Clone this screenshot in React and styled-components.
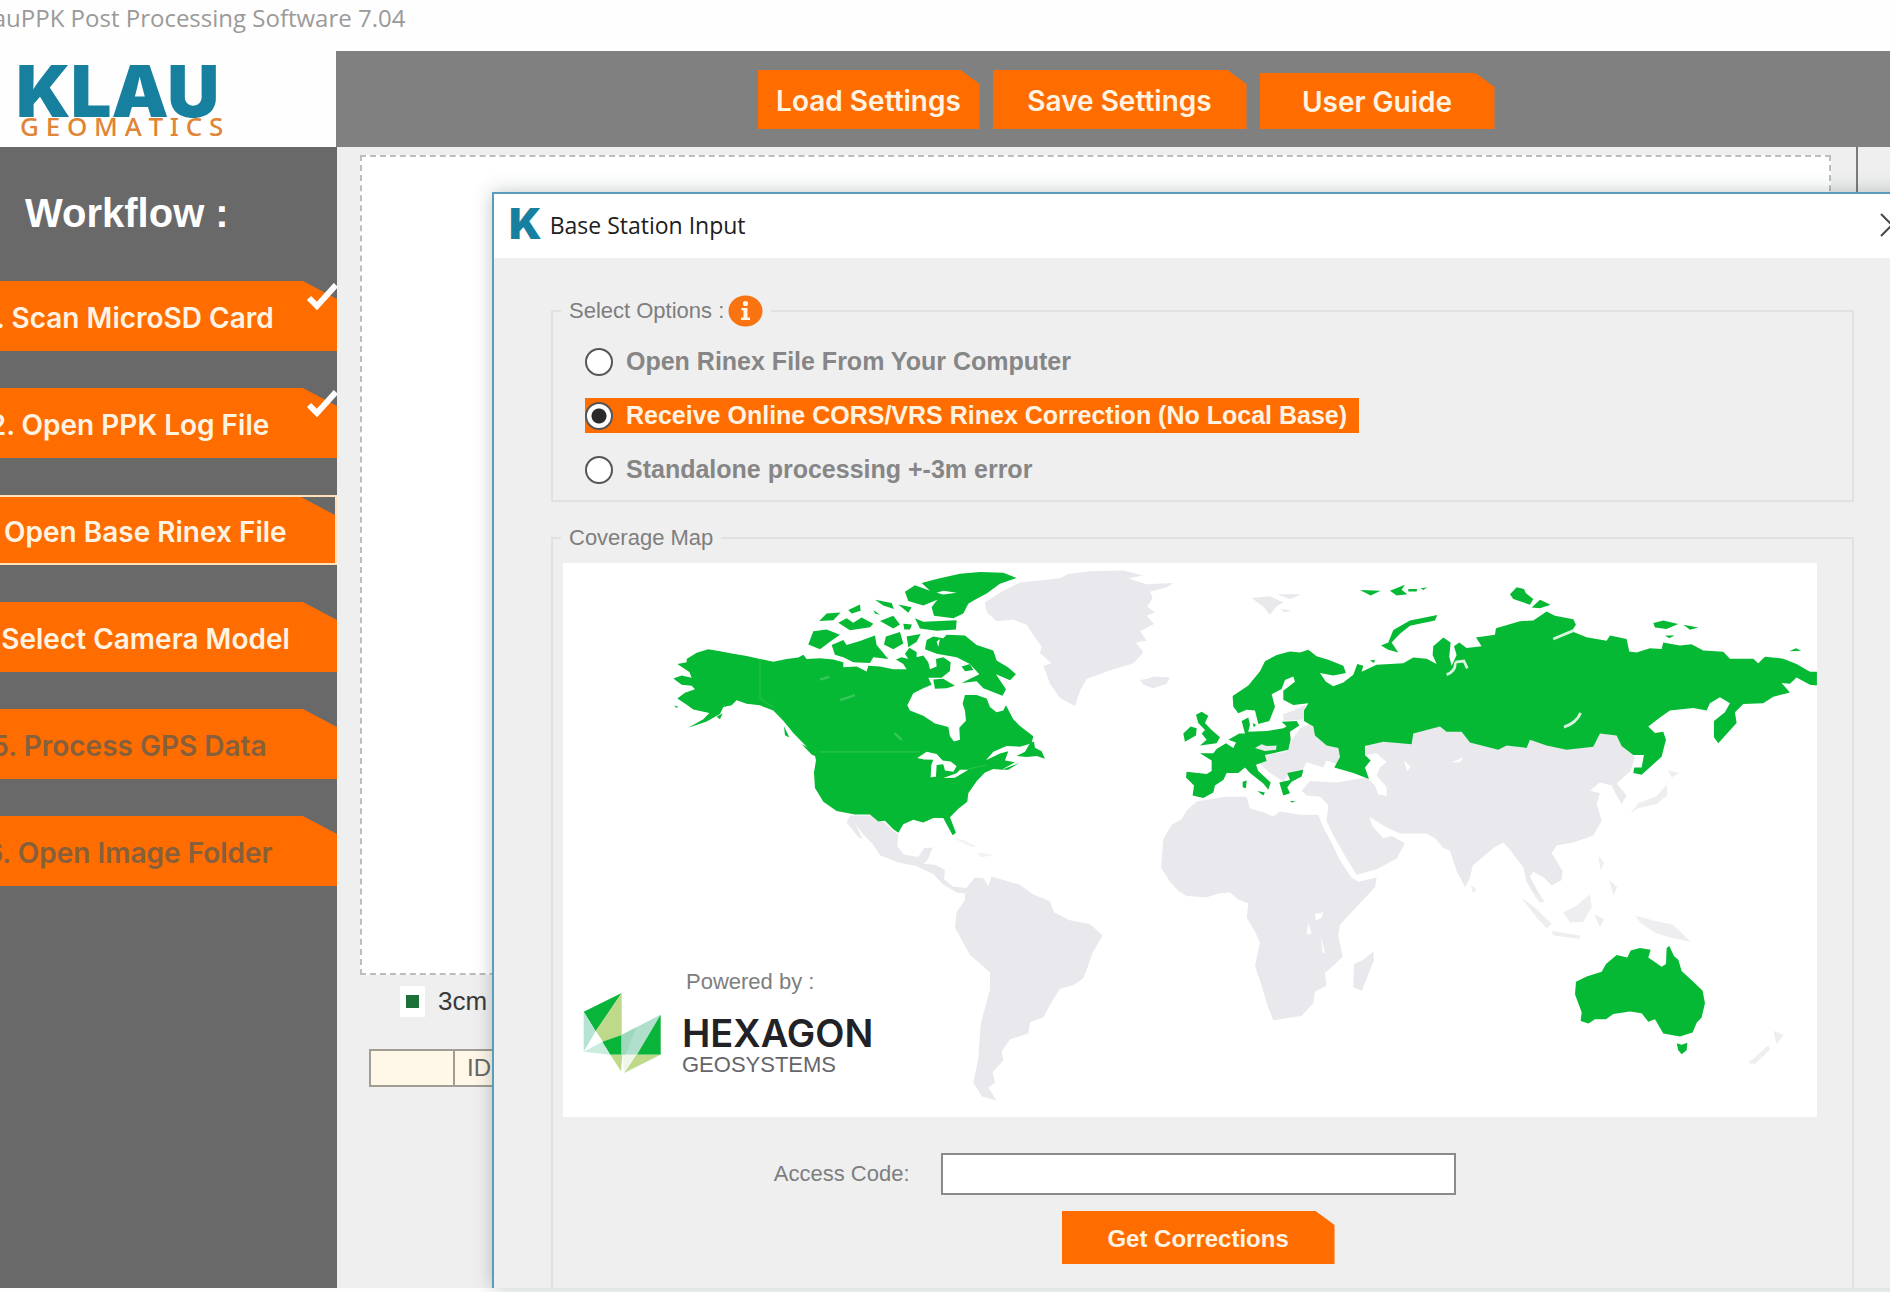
import React, { useState } from 'react';
import styled, { createGlobalStyle } from 'styled-components';

const GlobalStyle = createGlobalStyle`
  * {
    box-sizing: border-box;
  }

  body {
    margin: 0;
    background: #fefefe;
    font-family: 'Liberation Sans', Arial, sans-serif;
    overflow: hidden;
  }
`;

const Shell = styled.div`
  position: relative;
  display: flex;
  flex-direction: column;
  height: 100vh;
  padding-bottom: 4px;
  overflow: hidden;
`;

const TitleBar = styled.header`
  height: 51px;
  padding-top: 2px;
  margin-left: -28px;
  color: #9a9a9a;
  font-family: 'Open Sans', 'Noto Sans', sans-serif;
  font-size: 24px;
  line-height: 32px;
  white-space: nowrap;
`;

const TopBar = styled.div`
  display: flex;
  height: 96px;
`;

const Brand = styled.div`
  width: 336px;
  padding: 8px 0 0 16px;
  background: #fefefe;
`;

const BrandName = styled.div`
  color: #17809f;
  font-family: Inter, sans-serif;
  font-weight: 900;
  font-size: 72px;
  line-height: 64px;
  height: 54px;
`;

const BrandSub = styled.div`
  padding-left: 4px;
  color: #e08535;
  font-family: 'Noto Sans', sans-serif;
  font-size: 26px;
  font-weight: 500;
  line-height: 26px;
  white-space: nowrap;
`;

const Toolbar = styled.nav`
  flex: 1;
  display: flex;
  justify-content: center;
  align-items: flex-end;
  gap: 13px;
  padding: 0 0 18px 26px;
  background: #808080;
`;

const OrangeButton = styled.button`
  width: ${(props) => props.$width}px;
  height: ${(props) => props.$height}px;
  padding: 2px 0 0;
  border: none;
  background: #ff6d00;
  color: #fff3e4;
  font-family: ${(props) => (props.$plain ? "'Liberation Sans', Arial" : 'Inter')}, sans-serif;
  font-size: ${(props) => (props.$plain ? 24 : 28)}px;
  font-weight: ${(props) => (props.$plain ? 700 : 600)};
  white-space: nowrap;
  cursor: pointer;
  clip-path: polygon(0 0, calc(100% - 19px) 0, 100% 14px, 100% 100%, 0 100%);
`;

const Body = styled.div`
  flex: 1;
  display: flex;
  min-height: 0;
`;

const Sidebar = styled.aside`
  width: 337px;
  background: #696969;
  overflow: hidden;
`;

const SidebarTitle = styled.h1`
  margin: 0;
  padding: 44px 0 46px 25px;
  color: #ffffff;
  font-size: 40px;
  line-height: 44px;
`;

const StepList = styled.ol`
  display: flex;
  flex-direction: column;
  gap: 37px;
  margin: 0 0 0 -79px;
  padding: 0;
  list-style: none;
`;

const Step = styled.li`
  position: relative;
  display: flex;
  height: 70px;
  border: ${(props) => (props.$current ? '2px solid #ffe3b8' : 'none')};
`;

const StepButton = styled.button`
  flex: 1;
  padding: 4px 0 0;
  border: none;
  background: #ff6d00;
  color: #fff3e4;
  font-family: Inter, sans-serif;
  font-size: 28px;
  font-weight: 600;
  white-space: nowrap;
  cursor: pointer;
  clip-path: polygon(0 0, calc(100% - 34px) 0, 100% 18px, 100% 100%, 0 100%);

  &:disabled {
    color: #86603c;
    cursor: default;
  }
`;

const StepCheck = styled.svg`
  position: absolute;
  top: 0;
  right: 0;
  width: 31px;
  height: 30px;
`;

const Main = styled.main`
  flex: 1;
  display: flex;
  background: #efefef;
`;

const PlotColumn = styled.section`
  flex: 1;
  display: flex;
  flex-direction: column;
  padding: 8px 25px 201px 23px;
  border-right: 2px solid #7b7b7b;
`;

const SideGutter = styled.div`
  width: 32px;
`;

const PlotArea = styled.div`
  flex: 1;
  background: #ffffff;
  border: 2px dashed #bdbdbd;
`;

const Legend = styled.div`
  display: flex;
  align-items: center;
  gap: 13px;
  margin: 11px 0 32px 40px;
  color: #3a3a3a;
  font-size: 26px;
  line-height: 31px;
`;

const Swatch = styled.span`
  width: 25px;
  height: 31px;
  background: #1c7038;
  border: solid #ffffff;
  border-width: 9px 6px;
`;

const PointTable = styled.table`
  margin-left: 9px;
  border-collapse: collapse;
  background: #fff7e8;

  th {
    height: 36px;
    padding: 0 12px;
    border: 2px solid #a19c94;
    color: #666;
    font-size: 24px;
    font-weight: 400;
    line-height: 28px;
    text-align: left;
  }

  th:first-child {
    width: 84px;
  }
`;

const Dialog = styled.div`
  position: absolute;
  top: 192px;
  right: -24px;
  bottom: 4px;
  left: 492px;
  display: flex;
  flex-direction: column;
  background: #efefef;
  border: 2px solid #5b9cbd;
  border-bottom: none;
  box-shadow: 0 0 18px rgba(40, 60, 60, 0.28);
  overflow: hidden;
`;

const DialogBar = styled.div`
  flex: none;
  display: flex;
  align-items: center;
  gap: 8px;
  height: 64px;
  padding: 0 8px 2px 15px;
  background: #ffffff;
`;

const DialogMark = styled.span`
  padding-bottom: 4px;
  color: #17809f;
  font-family: Inter, sans-serif;
  font-size: 43px;
  font-weight: 900;
  line-height: 44px;
`;

const DialogTitle = styled.h2`
  flex: 1;
  margin: 0;
  color: #202020;
  font-family: 'Open Sans', 'Noto Sans', sans-serif;
  font-size: 23px;
  font-weight: 400;
  line-height: 32px;
`;

const CloseButton = styled.button`
  padding: 0;
  border: none;
  background: none;
  line-height: 0;
  cursor: pointer;
`;

const DialogBody = styled.form`
  display: flex;
  flex-direction: column;
  gap: 20px;
  padding: 37px 58px 0 57px;
`;

const Group = styled.fieldset`
  min-width: 0;
  margin: 0;
  padding: 0;
  border: 2px solid #e1e1e1;
`;

const GroupTitle = styled.legend`
  display: flex;
  align-items: center;
  gap: 4px;
  height: 32px;
  margin-left: 8px;
  padding: 0 8px;
  color: #7e7e7e;
  font-size: 22px;
  line-height: 32px;
`;

const OptionList = styled.div`
  display: flex;
  flex-direction: column;
  align-items: flex-start;
  gap: 19px;
  padding: 17px 32px 13px;
`;

const Option = styled.label`
  display: flex;
  align-items: center;
  gap: 13px;
  height: 35px;
  padding-right: 12px;
  background: ${(props) => (props.$selected ? '#ff6d00' : 'transparent')};
  color: ${(props) => (props.$selected ? '#fff3e4' : '#868686')};
  font-size: 25px;
  font-weight: 700;
  white-space: nowrap;
  cursor: pointer;
`;

const Radio = styled.input`
  appearance: none;
  width: 28px;
  height: 28px;
  margin: 0;
  border: 2px solid #555555;
  border-radius: 50%;
  background: #ffffff;

  &:checked {
    background: radial-gradient(circle, #2a2a2a 7px, #ffffff 8px);
  }
`;

const MapFrame = styled.div`
  position: relative;
  margin: 9px 35px 36px 10px;
  background: #ffffff;

  > svg {
    display: block;
    width: 100%;
  }
`;

const PoweredBy = styled.div`
  position: absolute;
  left: 20px;
  bottom: 44px;
  display: grid;
  grid-template-columns: 78px auto;
  column-gap: 21px;
  align-items: center;
`;

const PoweredLabel = styled.span`
  grid-column: 2;
  padding-left: 4px;
  color: #7e7e7e;
  font-size: 22px;
  line-height: 22px;
`;

const Partner = styled.div`
  padding-top: 20px;
  height: 80px;
`;

const PartnerName = styled.div`
  color: #222226;
  font-family: Inter, sans-serif;
  font-size: 38px;
  font-weight: 600;
  line-height: 40px;
`;

const PartnerSub = styled.div`
  color: #66666a;
  font-size: 22px;
  line-height: 24px;
`;

const AccessForm = styled.div`
  display: grid;
  grid-template-columns: max-content 515px;
  gap: 16px 31px;
  align-items: center;
  padding: 0 0 60px 17%;
`;

const AccessLabel = styled.label`
  color: #7e7e7e;
  font-size: 22px;
`;

const AccessInput = styled.input`
  width: 100%;
  height: 42px;
  padding: 0 8px;
  border: 2px solid #8b8b8b;
  background: #ffffff;
  font-size: 22px;
`;

const SubmitCell = styled.div`
  grid-column: 2;
  display: flex;
  justify-content: center;
`;

const steps = [
  { label: '1. Scan MicroSD Card', done: true },
  { label: '2. Open PPK Log File', done: true },
  { label: '3. Open Base Rinex File', current: true },
  { label: '4. Select Camera Model' },
  { label: '5. Process GPS Data', disabled: true },
  { label: '6. Open Image Folder', disabled: true },
];

const options = [
  { id: 'file', label: 'Open Rinex File From Your Computer' },
  { id: 'online', label: 'Receive Online CORS/VRS Rinex Correction (No Local Base)' },
  { id: 'standalone', label: 'Standalone processing +-3m error' },
];

const InfoIcon = () => (
  <svg width="35" height="32" viewBox="0 0 35 32" aria-hidden="true">
    <ellipse cx="17.5" cy="16" rx="17" ry="15.5" fill="#f97310" />
    <circle cx="17.5" cy="8.5" r="2.6" fill="#fff3e4" />
    <path d="M13.5 13h6v9.5h2.5V25h-9v-2.500h2.500v-7h-2z" fill="#fff3e4" />
  </svg>
);

const HexagonLogo = () => (
  <svg width="78" height="80" viewBox="72 100 234 240" aria-hidden="true">
    <path d="M74 156L188 100L110 215Z" fill="#09b43a" />
    <path d="M188 100V226L132 246L110 215Z" fill="#bfd98a" />
    <path d="M74 156L110 215L74 276Z" fill="#b5e3d4" />
    <path d="M74 276L130 246L152 285Z" fill="#c9ecdf" />
    <path d="M110 215L132 246L92 262Z" fill="#ffffff" />
    <path d="M130 246L188 226V285H154Z" fill="#09b43a" />
    <path d="M188 226L305 165L236 285H188Z" fill="#b0dfcc" />
    <path d="M188 226L232 203L200 285H188Z" fill="#9fd8bd" />
    <path d="M305 165V285H234Z" fill="#09b43a" />
    <path d="M154 285H190L186 335Z" fill="#bfd98a" />
    <path d="M305 285L195 340L232 285Z" fill="#bfd98a" />
    <path d="M190 285H232L195 340Z" fill="#f0f7ea" />
  </svg>
);

// Each region is drawn on its own grid and placed by its group transform.
const CoverageMap = () => (
  <svg viewBox="0 0 1254 554" role="img" aria-label="Coverage Map">
    <g transform="translate(437 -24) scale(0.3333 0.3571)" fill="#e9e9ed">
      <path d="M-45 178L0 150L60 122L180 110L205 98L270 90L370 88L430 102L385 110L440 127L520 123L500 135L450 148L458 165L442 190L465 205L440 215L462 238L420 258L440 285L408 290L430 318L400 348L330 368L260 392L240 425L225 468L180 445L150 405L130 355L155 348L120 320L125 300L108 280L80 240L40 226L-10 230L-40 205Z" />
      <path d="M420 395L440 392L460 385L510 388L500 405L460 418L430 408Z" />
      <path d="M755 165L810 160L850 178L830 188L810 212L790 190ZM830 155L905 155L870 168ZM840 195L875 200L855 206Z" />
      <path d="M560 760L590 735L620 730L680 722L740 722L750 755L790 765L820 777L840 763L900 772L955 772L970 808L1000 860L1020 900L1055 948L1075 960L1130 948L1125 975L1080 1020L1020 1080L1015 1110L1028 1170L1000 1195L975 1215L980 1250L945 1268L940 1300L905 1335L860 1342L820 1348L800 1300L785 1250L765 1195L780 1130L765 1100L740 1060L745 1020L715 1010L690 990L660 992L620 1003L560 1000L535 985L510 960L483 920L490 840L515 800L545 785Z" />
      <path d="M1120 1155L1122 1180L1085 1265L1060 1255L1062 1190L1090 1178Z" />
      <path d="M900 530L930 518L950 545L1000 575L1025 595L1010 630L980 620L970 640L920 625L905 652L870 655L850 680L810 655L780 630L800 605L860 595L878 560ZM850 490L880 480L915 465L915 505L850 510Z" />
      <path d="M905 705L930 678L1010 682L1100 668L1125 690L1135 715L1160 720L1160 695L1130 662L1140 640L1160 625L1130 600L1095 605L1100 580L1140 560L1230 540L1330 520L1400 520L1500 570L1600 560L1800 540L1850 545L1905 612L1892 650L1850 685L1880 718L1865 742L1848 715L1835 690L1800 682L1770 705L1800 712L1790 740L1805 790L1780 830L1720 850L1670 858L1655 880L1688 930L1685 955L1655 970L1632 948L1600 932L1590 945L1612 985L1635 1018L1610 1008L1580 960L1570 920L1530 870L1510 850L1480 865L1450 890L1418 915L1410 950L1395 975L1370 930L1350 872L1330 865L1305 838L1280 825L1200 825L1160 808L1108 778L1118 805L1150 838L1175 832L1215 852L1190 895L1130 925L1070 940L1040 895L1000 830L980 790L985 745L960 722L920 718Z" />
      <g fill="#ffffff">
        <path d="M945 1050L970 1045L965 1060L948 1068ZM925 1075L935 1105L920 1108ZM962 1110L975 1160L968 1160ZM1212 620L1232 638L1222 650ZM1355 625L1390 612L1380 625Z" />
      </g>
    </g>

    <g transform="translate(-3 -4) scale(0.3333 0.3444)" fill="#e9e9ed">
      <path d="M860 765L870 745L935 745L955 762L975 765L1000 790L1015 800L1012 835L1032 858L1075 865L1092 840L1118 838L1105 870L1092 885L1125 888L1155 902L1152 930L1180 952L1222 955L1225 972L1190 968L1150 945L1120 915L1070 892L1010 880L960 860L940 830L910 800L885 768L908 812L895 808Z" />
      <path d="M1180 808L1215 818L1250 836L1235 836L1200 820ZM1255 852L1305 860L1260 866Z" fill="#f3f3f5" />
      <path d="M1215 960L1245 925L1272 928L1285 950L1295 922L1340 935L1380 946L1420 974L1470 994L1482 1026L1530 1049L1590 1060L1628 1093L1597 1145L1585 1180L1570 1217L1540 1238L1500 1248L1470 1295L1450 1331L1410 1345L1405 1378L1350 1395L1325 1430L1330 1456L1298 1490L1305 1520L1285 1535L1310 1572L1265 1560L1240 1520L1255 1450L1262 1350L1290 1250L1290 1200L1230 1150L1185 1070L1190 1025L1215 990Z" />
    </g>

    <g transform="translate(837 -24) scale(0.3333 0.3571)" fill="#eeeef0">
      <path d="M365 1005L400 1028L455 1078L440 1090L405 1055ZM455 1098L540 1110L538 1120L460 1110ZM490 1045L525 1030L570 995L575 1030L550 1072L510 1074ZM582 1050L612 1065L600 1088ZM595 888L612 905L602 928ZM628 955L652 975L640 998ZM392 980L432 1012L420 1020ZM705 1055L760 1068L820 1080L872 1128L820 1118L770 1105L725 1078ZM213 968L230 982L218 992Z" />
      <path d="M800 688L802 718L770 742L712 755L690 770L715 740L770 720ZM805 648L838 655L815 668ZM1120 1378L1152 1388L1130 1415ZM1105 1418L1110 1430L1065 1470L1045 1468Z" />
    </g>

    <g transform="translate(-3 -4) scale(0.3333 0.3444)" fill="#06b934">
      <path d="M445 262L480 268L520 275L560 282L600 290L640 298L680 290L715 286L730 278L740 290L780 288L820 292L850 300L850 314L890 312L920 327L925 310L960 312L1000 320L1040 320L1030 305L1008 292L1025 285L1045 290L1035 275L1048 258L1070 270L1070 285L1090 280L1105 300L1110 320L1130 312L1128 290L1150 285L1172 300L1170 325L1145 345L1105 345L1115 365L1090 375L1060 390L1042 425L1050 440L1090 455L1125 478L1165 488L1170 515L1182 530L1200 525L1198 490L1218 470L1215 440L1208 420L1215 395L1250 395L1280 405L1290 430L1310 445L1330 440L1338 425L1360 465L1380 485L1420 515L1415 535L1380 545L1340 543L1300 560L1278 584L1320 565L1345 558L1335 585L1365 590L1325 612L1300 610L1275 620L1250 645L1225 680L1222 705L1195 725L1170 750L1188 795L1178 802L1160 770L1150 752L1120 752L1090 765L1060 757L1030 770L1015 795L1000 785L975 760L955 762L930 742L885 742L830 732L790 705L765 665L762 620L768 585L765 570L740 545L700 505L670 470L640 440L600 425L560 420L530 410L515 425L490 430L480 450L440 472L385 490L430 465L448 447L400 437L378 422L352 405L375 388L405 378L395 368L365 365L340 347L365 338L395 345L388 328L352 305L380 300L380 290L410 272Z" />
      <path d="M1395 560L1410 535L1422 530L1425 548L1445 558L1455 580L1430 572L1400 575L1370 572ZM1325 612L1378 592L1345 612ZM725 538L750 550L778 578L755 568ZM672 485L688 518L675 512ZM470 458L488 448L480 465ZM343 425L356 430L348 432Z" />
      <path d="M1370 55L1330 40L1260 38L1200 43L1130 58L1085 70L1110 92L1065 76L1035 95L1045 122L1090 135L1132 118L1115 140L1122 165L1180 172L1210 158L1225 130L1245 118L1280 100L1320 72Z" />
      <path d="M1065 172L1090 182L1190 178L1188 205L1130 208L1080 202ZM1100 235L1120 225L1150 230L1160 220L1215 222L1250 250L1300 266L1310 295L1345 315L1368 335L1350 352L1308 335L1338 378L1328 397L1270 375L1250 355L1205 360L1258 335L1230 305L1190 285L1130 275L1095 262Z" />
      <path d="M815 250L850 235L860 250L900 238L945 222L950 250L985 290L940 285L930 302L880 300L850 285L825 278ZM760 210L800 205L840 220L810 240L780 262L745 248ZM835 185L860 172L880 185L905 170L940 188L930 198L870 207ZM778 180L800 158L842 155L820 178ZM865 148L900 132L902 150L875 158ZM945 118L995 128L1002 145L970 135ZM960 180L1000 165L1020 190L1000 202ZM978 225L1020 212L1030 245L1000 262L972 248ZM1040 225L1082 218L1070 240L1045 256ZM1015 132L1055 140L1045 156ZM1120 350L1150 348L1185 368L1160 375L1125 377ZM1030 188L1056 190L1050 205L1033 205ZM1205 312L1230 305L1240 322L1215 326ZM940 148L960 162L945 158Z" />
      <g fill="#ffffff">
        <path d="M1072 578L1100 560L1130 566L1148 585L1172 588L1190 602L1180 618L1155 614L1150 596L1130 598L1128 632L1112 634L1114 598L1120 583L1092 582ZM1150 636L1190 622L1200 612L1225 612L1185 635Z" />
        <path d="M1130 98L1150 92L1190 98L1150 103ZM1130 240L1140 232L1135 255Z" />
      </g>
      <path d="M778 560H1080M600 292V405L640 430M1225 610L1280 598" fill="none" stroke="#2bc350" strokeWidth="3" />
      <path d="M780 350L808 342M840 410L885 395M1003 505L1025 525" fill="none" stroke="#35c75a" strokeWidth="7" />
    </g>

    <g transform="translate(437 -24) scale(0.3333 0.3571)" fill="#06b934">
      <path d="M698 440L745 410L780 370L795 342L830 325L870 315L900 318L925 310L950 328L985 338L1030 355L1038 375L1000 382L960 375L978 400L1000 412L1030 402L1060 380L1072 350L1090 355L1085 372L1130 352L1210 348L1240 332L1280 335L1310 350L1298 325L1300 300L1330 276L1352 290L1348 330L1355 355L1370 325L1362 300L1378 290L1400 305L1445 300L1428 276L1485 268L1488 250L1560 230L1600 228L1640 203L1665 215L1720 225L1728 240L1715 258L1760 275L1820 285L1830 270L1880 280L1888 315L1910 318L1950 306L1985 308L1990 290L2040 298L2075 295L2110 312L2170 316L2190 335L2260 335L2275 348L2295 330L2350 335L2390 350L2430 372L2451 372L2451 410L2430 408L2390 388L2370 405L2345 403L2370 430L2320 442L2290 460L2230 462L2205 485L2210 515L2155 572L2142 555L2142 510L2175 485L2190 460L2160 443L2130 460L2120 480L2080 473L2010 480L1980 500L1945 525L1965 543L1990 540L1998 562L1985 610L1925 660L1900 655L1903 640L1925 640L1932 605L1900 605L1865 580L1850 550L1800 545L1780 582L1700 590L1640 578L1590 562L1580 585L1520 578L1495 590L1410 570L1385 540L1340 540L1320 525L1240 545L1235 575L1150 568L1095 580L1095 605L1112 620L1095 640L1107 672L1060 655L1003 640L1020 610L1015 585L980 578L945 550L940 525L912 510L912 480L925 460L880 465L850 450L850 425L885 400L880 385L855 395L845 420L815 435L825 470L808 510L775 518L765 480L740 478L715 488L700 470Z" />
      <path d="M1143 298L1165 290L1180 255L1230 228L1312 213L1305 228L1230 243L1200 265L1175 290L1195 318L1165 310ZM1080 143L1142 145L1112 158ZM1170 145L1215 128L1205 142L1222 155L1190 158ZM1225 140L1252 140L1250 147L1225 147ZM1262 138L1282 136L1270 143ZM1110 340L1125 338L1122 347Z" />
      <path d="M588 492L605 484L625 495L615 515L635 535L660 555L650 572L600 578L620 562L605 545L615 535L595 515ZM550 545L572 525L590 530L588 550L555 568Z" />
      <path d="M600 600L640 600L650 588L678 572L700 585L708 570L685 562L718 545L735 545L725 510L745 500L750 520L745 540L800 538L850 530L860 525L845 512L890 510L898 522L870 540L872 562L865 590L820 600L795 605L800 622L768 632L775 650L812 682L805 702L790 685L750 655L735 640L715 655L680 655L670 675L645 690L640 710L610 725L578 718L582 690L558 668L560 652L620 658L635 650L635 620Z" />
      <path d="M838 682L870 675L862 655L910 646L905 665L875 680L862 695L870 712L850 718ZM728 680L740 676L738 698L728 695ZM772 706L795 710L790 718ZM758 515L768 520L762 528ZM870 733L888 735L875 738Z" />
      <path d="M765 585L785 575L800 580L830 578L828 590L795 594Z" fill="#e9e9ed" />
      <path d="M1692 527Q1730 515 1742 487M1340 380Q1368 370 1366 345M1366 345L1392 342L1402 362M1660 280L1722 256" fill="none" stroke="#d8f4de" strokeWidth="8" />
    </g>

    <g transform="translate(837 -24) scale(0.3333 0.3571)" fill="#06b934">
      <path d="M528 1240L560 1225L605 1212L618 1190L650 1165L682 1172L692 1152L720 1145L752 1150L745 1172L785 1198L798 1190L800 1145L808 1140L822 1168L835 1178L845 1210L880 1240L908 1265L915 1300L905 1340L890 1355L878 1382L840 1393L790 1385L765 1345L745 1352L725 1328L690 1323L640 1330L618 1345L585 1345L565 1357L542 1350L545 1325L525 1275Z" />
      <path d="M830 1412L845 1416L862 1411L860 1432L845 1443L835 1432Z" />
      <path d="M330 155L350 135L372 140L378 152L400 168L390 184L362 175L340 168ZM395 192L420 170L452 184L420 194ZM760 235L790 228L835 238L800 252L765 248ZM850 240L895 248L870 254ZM795 270H824L808 278ZM1168 314L1188 306L1204 313Z" />
    </g>
  </svg>
);

const App = () => {
  const [option, setOption] = useState('online');
  const [accessCode, setAccessCode] = useState('');

  return (
    <Shell>
      <GlobalStyle />
      <TitleBar>KlauPPK Post Processing Software 7.04</TitleBar>

      <TopBar>
        <Brand>
          <BrandName>KLAU</BrandName>
          <BrandSub>G E O M A T I C S</BrandSub>
        </Brand>
        <Toolbar>
          <OrangeButton type="button" $width={222} $height={59}>Load Settings</OrangeButton>
          <OrangeButton type="button" $width={254} $height={59}>Save Settings</OrangeButton>
          <OrangeButton type="button" $width={235} $height={56}>User Guide</OrangeButton>
        </Toolbar>
      </TopBar>

      <Body>
        <Sidebar>
          <SidebarTitle>Workflow :</SidebarTitle>
          <StepList>
            {steps.map((step) => (
              <Step key={step.label} $current={step.current}>
                <StepButton type="button" disabled={step.disabled}>{step.label}</StepButton>
                {step.done && (
                  <StepCheck viewBox="0 0 31 30" aria-hidden="true">
                    <path d="M3 17L11 25L30 4" fill="none" stroke="#ffffff" strokeWidth="6" />
                  </StepCheck>
                )}
              </Step>
            ))}
          </StepList>
        </Sidebar>

        <Main>
          <PlotColumn>
            <PlotArea />
            <Legend>
              <Swatch />
              <span>3cm</span>
            </Legend>
            <PointTable>
              <thead>
                <tr>
                  <th aria-label="Row" />
                  <th>ID</th>
                </tr>
              </thead>
            </PointTable>
          </PlotColumn>
          <SideGutter />
        </Main>
      </Body>

      <Dialog role="dialog" aria-labelledby="dialog-title">
        <DialogBar>
          <DialogMark>K</DialogMark>
          <DialogTitle id="dialog-title">Base Station Input</DialogTitle>
          <CloseButton type="button" aria-label="Close">
            <svg width="24" height="24" viewBox="0 0 24 24">
              <path d="M1 1L23 23M23 1L1 23" stroke="#4a4a4a" strokeWidth="2" />
            </svg>
          </CloseButton>
        </DialogBar>

        <DialogBody onSubmit={(e) => e.preventDefault()}>
          <Group>
            <GroupTitle>
              Select Options :
              <InfoIcon />
            </GroupTitle>
            <OptionList>
              {options.map((item) => (
                <Option key={item.id} $selected={option === item.id}>
                  <Radio
                    type="radio"
                    name="source"
                    checked={option === item.id}
                    onChange={() => setOption(item.id)}
                  />
                  {item.label}
                </Option>
              ))}
            </OptionList>
          </Group>

          <Group>
            <GroupTitle>Coverage Map</GroupTitle>
            <MapFrame>
              <CoverageMap />
              <PoweredBy>
                <PoweredLabel>Powered by :</PoweredLabel>
                <HexagonLogo />
                <Partner>
                  <PartnerName>HEXAGON</PartnerName>
                  <PartnerSub>GEOSYSTEMS</PartnerSub>
                </Partner>
              </PoweredBy>
            </MapFrame>
            <AccessForm>
              <AccessLabel htmlFor="access-code">Access Code:</AccessLabel>
              <AccessInput
                id="access-code"
                type="text"
                value={accessCode}
                onChange={(e) => setAccessCode(e.target.value)}
              />
              <SubmitCell>
                <OrangeButton type="submit" $plain $width={273} $height={53}>Get Corrections</OrangeButton>
              </SubmitCell>
            </AccessForm>
          </Group>
        </DialogBody>
      </Dialog>
    </Shell>
  );
};

export default App;
